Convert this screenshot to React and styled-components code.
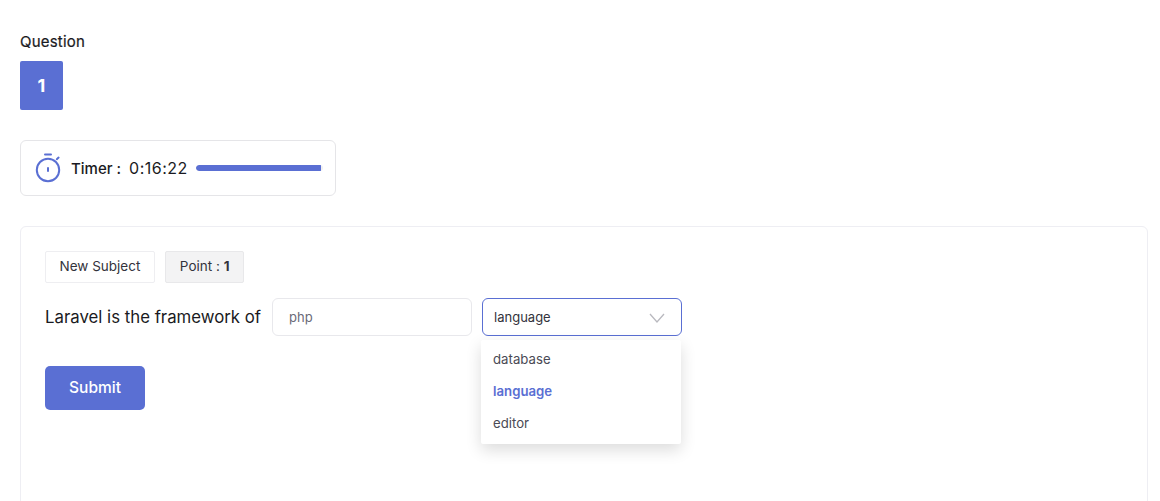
import React from 'react'
import styled, { createGlobalStyle } from 'styled-components'

const GlobalStyle = createGlobalStyle`
  html, body {
    margin: 0;
    height: 501px;
    overflow: hidden;
    background: #fff;
  }
  body {
    font-family: Inter, "Noto Sans", sans-serif;
    color: #1a1a22;
  }
  * {
    box-sizing: border-box;
  }
`

const Page = styled.div`
  padding: 33px 12px 0 20px;
`

const Heading = styled.div`
  font-size: 15px;
  font-weight: 400;
  letter-spacing: 0.2px;
  line-height: 18px;
  margin-bottom: 10px;
  -webkit-text-stroke: 0.2px #1a1a22;
`

const QuestionBadge = styled.div`
  width: 43px;
  height: 49px;
  display: flex;
  align-items: center;
  justify-content: center;
  background: #5a6fd3;
  border-radius: 2px;
  color: #fff;
  font-size: 18px;
  font-weight: 700;
  margin-bottom: 30px;
`

const TimerCard = styled.div`
  width: 316px;
  height: 56px;
  display: flex;
  align-items: center;
  padding: 0 12px 0 14px;
  border: 1px solid #e5e5e8;
  border-radius: 6px;
  margin-bottom: 30px;
`

const TimerIcon = styled.svg`
  width: 28px;
  height: 32px;
  margin-right: 8px;
  flex: none;
`

const TimerText = styled.span`
  font-size: 15px;
  font-weight: 500;
  white-space: nowrap;
  margin-right: 8px;
  flex: none;
`

const TimerValue = styled(TimerText)`
  font-size: 16px;
  font-weight: 400;
  letter-spacing: 0.5px;
`

const Track = styled.div`
  width: 127px;
  height: 6px;
  flex: none;
  border-radius: 3px;
  background: #f0f0f2;
  overflow: hidden;
`

const Fill = styled.div`
  height: 100%;
  background: #5a6fd3;
  border-radius: 3px 0 0 3px;
`

const QuestionCard = styled.div`
  height: 320px;
  padding: 24px;
  border: 1px solid #eeeef3;
  border-radius: 6px;
`

const TagRow = styled.div`
  display: flex;
  gap: 10px;
  margin-bottom: 15px;
`

const Tag = styled.div`
  height: 32px;
  display: flex;
  align-items: center;
  padding: 0 14px 2px 13.5px;
  font-size: 13.5px;
  color: #33333c;
  border: 1px solid ${p => (p.$muted ? '#e8e8ea' : '#eeeef1')};
  background: ${p => (p.$muted ? '#f3f3f4' : '#fff')};
  border-radius: 2px;
  white-space: pre;

  b {
    font-weight: 700;
  }
`

const AnswerRow = styled.div`
  display: flex;
  align-items: center;
  margin-bottom: 30px;
`

const Prompt = styled.span`
  font-size: 16.8px;
  margin-right: 11px;
  white-space: nowrap;
`

const Field = styled.div`
  width: 200px;
  height: 38px;
  display: flex;
  align-items: center;
  padding: 0 16px;
  font-size: 13px;
  color: #6a6a78;
  border: 1px solid #e8e8ec;
  border-radius: 6px;
  margin-right: 10px;
`

const SelectWrap = styled.div`
  position: relative;
  width: 200px;
`

const SelectBox = styled.div`
  height: 38px;
  display: flex;
  align-items: center;
  justify-content: space-between;
  padding: 0 16px 0 11px;
  font-size: 13px;
  color: #33333c;
  border: 1px solid #5a6fd3;
  border-radius: 6px;
`

const Chevron = styled.svg`
  width: 16px;
  height: 10px;
  margin-top: 1px;
`

const Menu = styled.div`
  position: absolute;
  top: 42px;
  left: -1px;
  width: 200px;
  padding: 3px 0 5px;
  background: #fff;
  border-radius: 2px;
  box-shadow: 0 6px 16px rgba(0, 0, 0, 0.14);
`

const MenuItem = styled.div`
  height: 32px;
  display: flex;
  align-items: center;
  padding: 0 12px;
  font-size: 13.2px;
  color: ${p => (p.$active ? '#5a6fd3' : '#4a4a55')};
  font-weight: ${p => (p.$active ? 600 : 400)};
`

const SubmitButton = styled.button`
  width: 100px;
  height: 44px;
  display: block;
  border: 0;
  border-radius: 5px;
  padding: 0 0 2px;
  background: #5a6fd3;
  color: #fff;
  font-family: inherit;
  font-size: 15.5px;
  font-weight: 500;
`

export default function App() {
  return (
    <Page>
      <GlobalStyle />
      <Heading>Question</Heading>
      <QuestionBadge>1</QuestionBadge>
      <TimerCard>
        <TimerIcon viewBox="0 0 28 32" fill="none" stroke="#5a6fd3" strokeWidth="2" strokeLinecap="round">
          <circle cx="13" cy="18" r="11.2" />
          <path d="M10 2.5h6" />
          <path d="M13 16v3" />
          <path d="M21.8 7.2l1.8-1.6" />
        </TimerIcon>
        <TimerText>Timer :</TimerText>
        <TimerValue>0:16:22</TimerValue>
        <Track>
          <Fill style={{ width: `${(125 / 127) * 100}%` }} />
        </Track>
      </TimerCard>
      <QuestionCard>
        <TagRow>
          <Tag>New Subject</Tag>
          <Tag $muted>
            Point : <b>1</b>
          </Tag>
        </TagRow>
        <AnswerRow>
          <Prompt>Laravel is the framework of</Prompt>
          <Field>php</Field>
          <SelectWrap>
            <SelectBox>
              language
              <Chevron viewBox="0 0 16 10" fill="none" stroke="#b9b9bf" strokeWidth="1.3">
                <path d="M1 1l7 8 7-8" />
              </Chevron>
            </SelectBox>
            <Menu>
              <MenuItem>database</MenuItem>
              <MenuItem $active>language</MenuItem>
              <MenuItem>editor</MenuItem>
            </Menu>
          </SelectWrap>
        </AnswerRow>
        <SubmitButton>Submit</SubmitButton>
      </QuestionCard>
    </Page>
  )
}
